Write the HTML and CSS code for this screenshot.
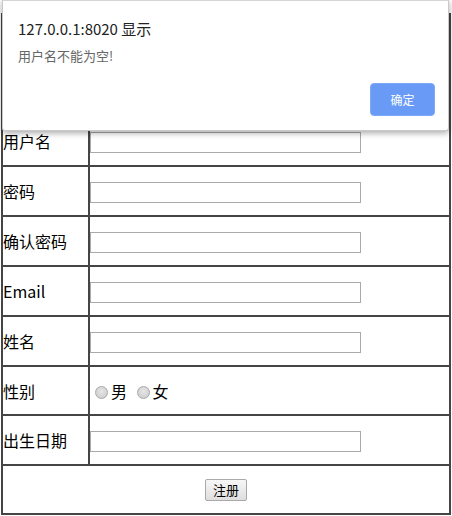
FILE: index.html
```html
<!DOCTYPE html>
<html lang="zh-CN">
<head>
<meta charset="utf-8">
<title>用户注册</title>
<link rel="stylesheet" href="styles.css">
</head>
<body>
<form class="reg-form">
  <table class="reg-table">
    <tr class="row-head"><td colspan="2"></td></tr>
    <tr class="row"><td class="label">用户名</td><td class="field"><input type="text" class="text-in"></td></tr>
    <tr class="row"><td class="label">密码</td><td class="field"><input type="password" class="text-in"></td></tr>
    <tr class="row"><td class="label">确认密码</td><td class="field"><input type="password" class="text-in"></td></tr>
    <tr class="row"><td class="label">Email</td><td class="field"><input type="text" class="text-in"></td></tr>
    <tr class="row"><td class="label">姓名</td><td class="field"><input type="text" class="text-in"></td></tr>
    <tr class="row row-short"><td class="label">性别</td><td class="field"><input type="radio" name="sex" class="radio"><span class="opt">男</span> <input type="radio" name="sex" class="radio"><span class="opt">女</span></td></tr>
    <tr class="row"><td class="label">出生日期</td><td class="field"><input type="text" class="text-in"></td></tr>
    <tr class="row row-short"><td colspan="2" class="submit-cell"><button type="button" class="submit-btn">注册</button></td></tr>
  </table>
</form>

<div class="alert">
  <div class="alert-title">127.0.0.1:8020 显示</div>
  <div class="alert-msg">用户名不能为空!</div>
  <div class="alert-actions">
    <button type="button" class="alert-ok">确定</button>
  </div>
</div>
</body>
</html>
```

FILE: styles.css
```css
html, body {
  margin: 0;
  padding: 0;
  background: #fff;
}
body {
  font-family: "Noto Sans CJK SC", "Noto Sans", sans-serif;
  color: #000;
  position: relative;
  width: 452px;
  height: 516px;
  overflow: hidden;
}
.reg-form {
  margin: 0;
  padding-top: 13px;
  padding-left: 1px;
}
.reg-table {
  width: 450px;
  border-collapse: separate;
  border-spacing: 0;
  border: 1px solid #454545;
}
.reg-table td {
  border: 1px solid #454545;
  padding: 0;
  font-size: 16px;
  line-height: 20px;
  vertical-align: middle;
}
.reg-table td.label {
  width: 85px;
}
.row-head td {
  height: 100px;
}
.row td {
  height: 48px;
}
.row-short td {
  height: 47px;
}
.text-in {
  box-sizing: border-box;
  width: 271px;
  height: 21px;
  margin: 0;
  padding: 1px 2px;
  border: 1px solid #a9a9a9;
  font: 13px "Noto Sans CJK SC", sans-serif;
  vertical-align: middle;
  background: #fff;
}
.radio {
  -webkit-appearance: none;
  appearance: none;
  box-sizing: border-box;
  width: 13px;
  height: 13px;
  margin: 0 3px 0 5px;
  border: 1px solid #a8a8a8;
  border-radius: 50%;
  background: radial-gradient(circle at 50% 40%, #e6e6e6 0%, #d6d6d6 55%, #c8c8c8 100%);
  vertical-align: -1px;
}
.opt {
  font-size: 16px;
  margin-right: 1px;
}
.submit-cell {
  text-align: center;
}
.submit-btn {
  box-sizing: border-box;
  width: 42px;
  height: 22px;
  padding: 0;
  margin: 0;
  border: 1px solid #a9a9a9;
  border-radius: 2px;
  background: linear-gradient(#f7f7f7, #dedede);
  font: 13px/20px "Noto Sans CJK SC", sans-serif;
  color: #000;
  vertical-align: middle;
}

.alert {
  position: absolute;
  left: 2px;
  top: 0;
  width: 447px;
  height: 131px;
  box-sizing: border-box;
  background: #fff;
  border: 1px solid #c9c9c9;
  border-top-color: #d4d4d4;
  border-radius: 0 0 3px 3px;
  box-shadow: 0 2px 6px rgba(0, 0, 0, 0.35);
  padding: 16px 13px 0 15px;
}
.alert-title {
  font-size: 15px;
  line-height: 24px;
  color: #222;
}
.alert-msg {
  margin-top: 6px;
  font-size: 13px;
  line-height: 18px;
  color: #666;
}
.alert-actions {
  display: flex;
  justify-content: flex-end;
  margin-top: 18px;
}
.alert-ok {
  box-sizing: border-box;
  width: 65px;
  height: 33px;
  margin: 0;
  padding: 0;
  border: 1px solid #7ca8f6;
  border-radius: 4px;
  background: #699bf6;
  color: #fff;
  font: 12px/31px "Noto Sans CJK SC", sans-serif;
}
```
